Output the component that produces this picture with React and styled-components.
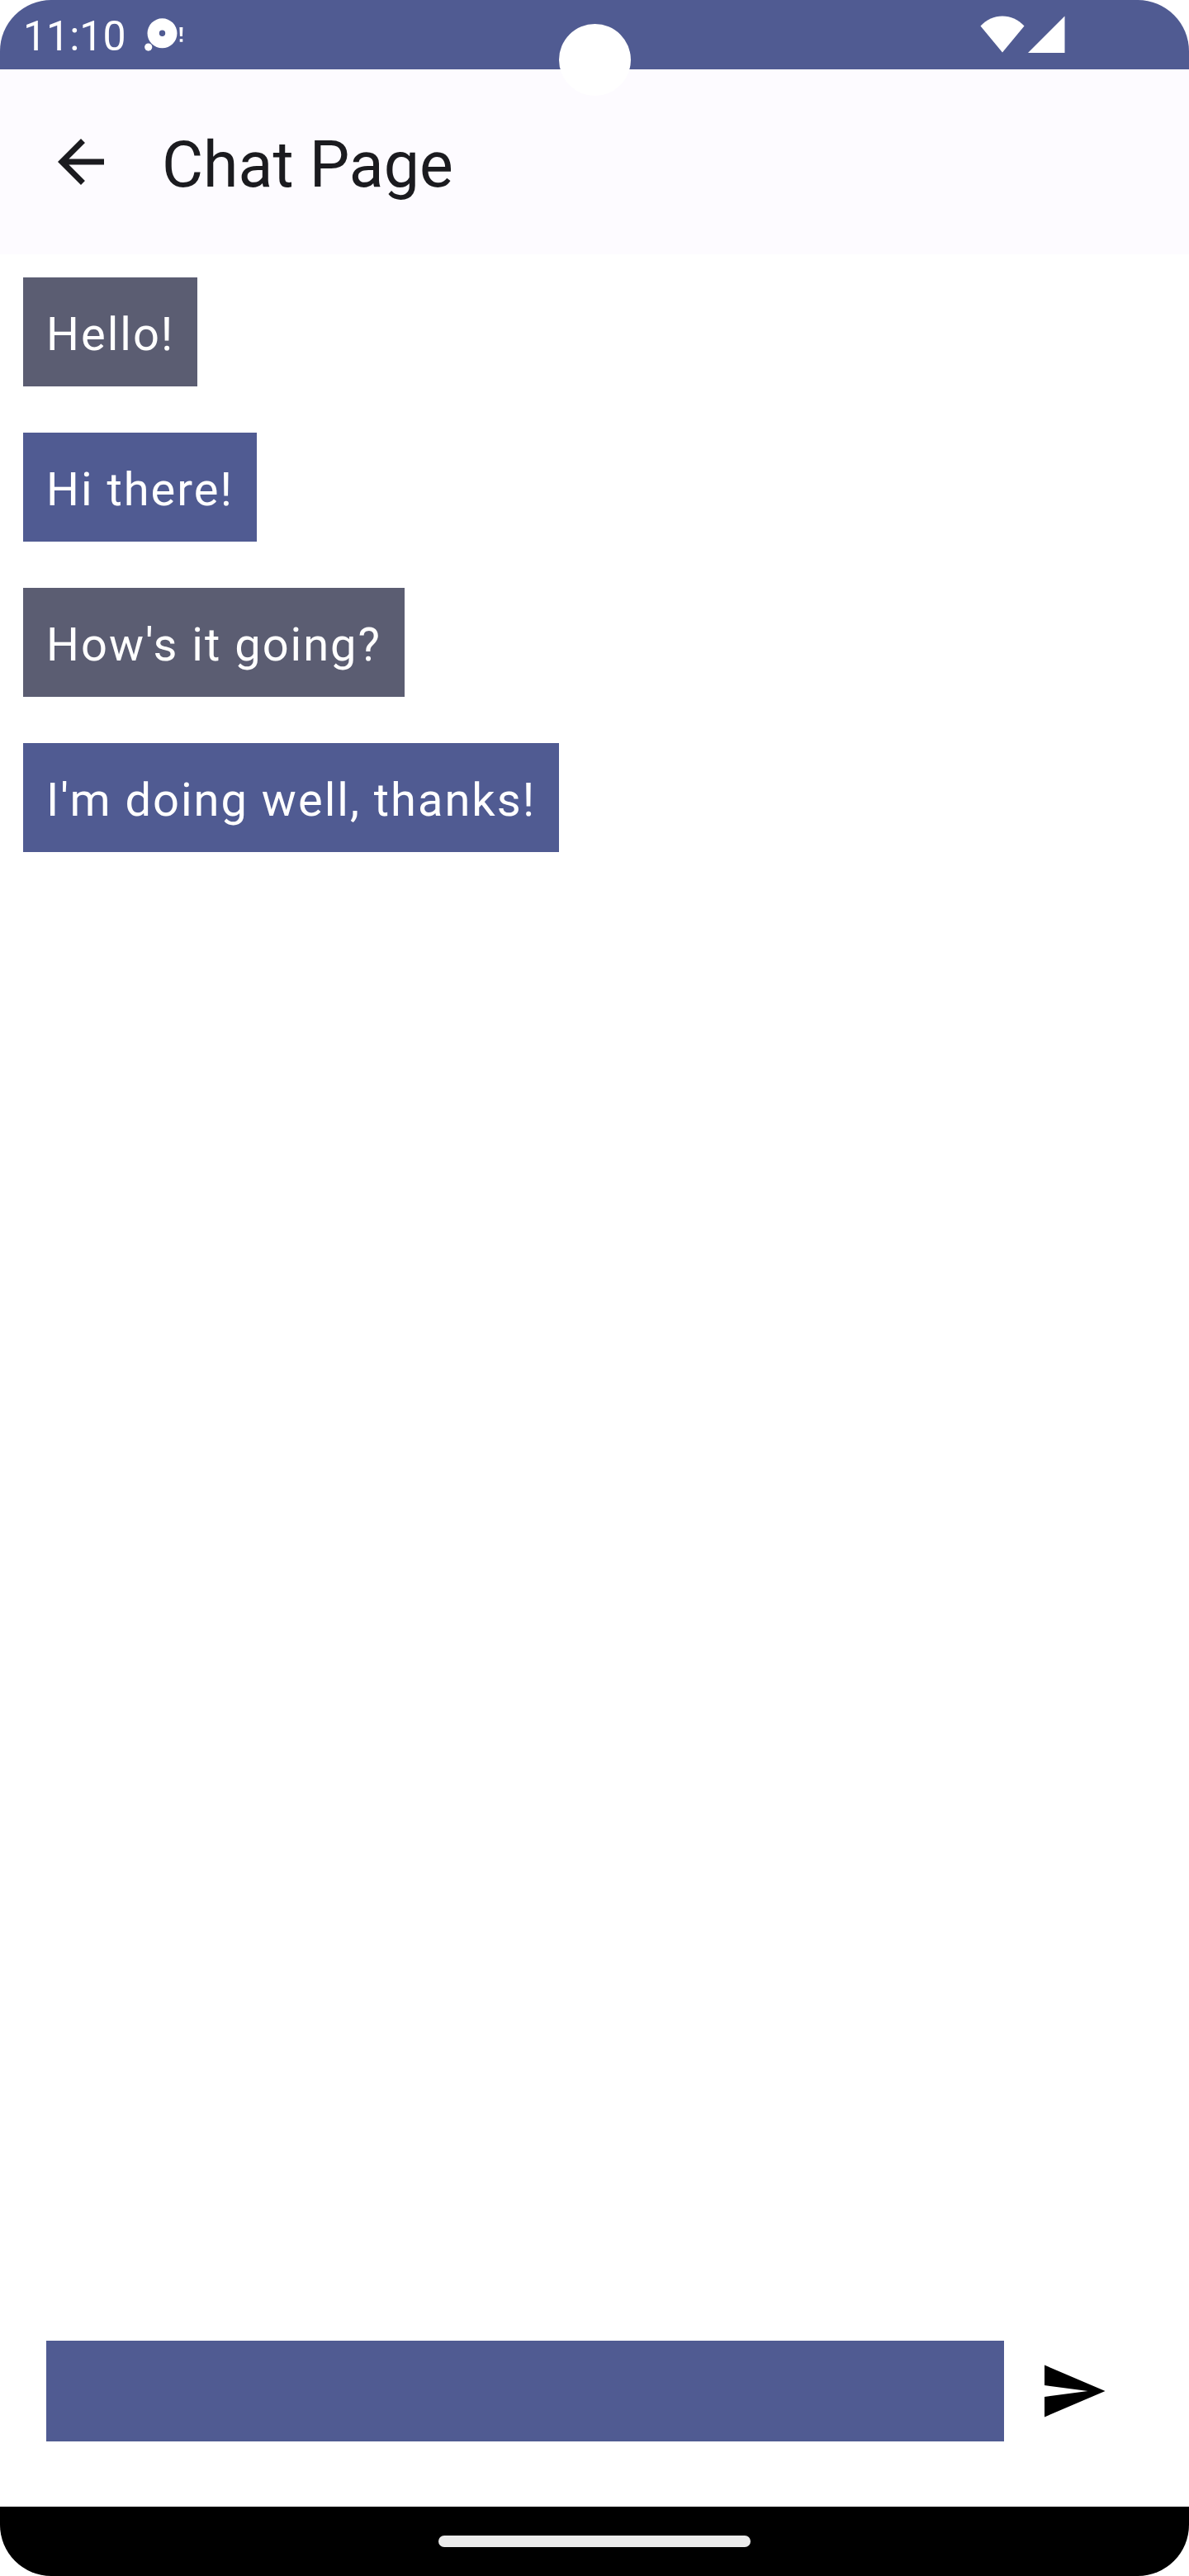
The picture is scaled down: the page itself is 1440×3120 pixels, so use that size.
import React, { useState } from "react";
import styled, { createGlobalStyle } from "styled-components";

const color = {
  primary: "#505b92",
  secondary: "#5b5d72",
  surface: "#fdfbff",
  ink: "#1b1b1f",
  handle: "#ebebeb",
};

const GlobalStyle = createGlobalStyle`
  *, *::before, *::after { box-sizing: border-box; }
  body {
    margin: 0;
    background: #ffffff;
    font-family: Roboto, "Liberation Sans", sans-serif;
  }
`;

const Screen = styled.div`
  position: relative;
  display: flex;
  flex-direction: column;
  min-height: 100vh;
  overflow: hidden;
  border-radius: 62px;
  background: #ffffff;
`;

const StatusBar = styled.div`
  display: flex;
  align-items: center;
  justify-content: space-between;
  height: 84px;
  padding: 0 150px 0 28px;
  background: ${color.primary};
  color: #ffffff;
`;

const StatusGroup = styled.div`
  display: flex;
  align-items: center;
  gap: ${(p) => p.$gap}px;
`;

const Clock = styled.time`
  padding-top: 4px;
  font-size: 50px;
  line-height: 80px;
`;

const Camera = styled.div`
  position: absolute;
  top: 29px;
  left: 50%;
  width: 87px;
  height: 87px;
  margin-left: -43px;
  border-radius: 50%;
  background: #ffffff;
`;

const AppBar = styled.header`
  display: flex;
  align-items: center;
  gap: 14px;
  height: 224px;
  padding: 0 14px;
  background: ${color.surface};
  color: ${color.ink};
`;

const IconButton = styled.button`
  display: flex;
  flex: none;
  align-items: center;
  justify-content: center;
  width: 168px;
  height: 168px;
  padding: 0;
  border: 0;
  background: transparent;
  color: inherit;
  cursor: pointer;
`;

const Title = styled.h1`
  margin: 0;
  padding-top: 8px;
  font-size: 77px;
  font-weight: 400;
  line-height: 98px;
`;

const Messages = styled.ul`
  display: flex;
  flex: 1;
  flex-direction: column;
  align-items: flex-start;
  gap: 56px;
  margin: 0;
  padding: 28px;
  list-style: none;
`;

const Bubble = styled.li`
  padding: 28px 28px 22px;
  background: ${(p) => (p.$mine ? color.primary : color.secondary)};
  color: #ffffff;
  font-size: 56px;
  line-height: 82px;
  letter-spacing: 2px;
`;

const Composer = styled.form`
  display: flex;
  align-items: center;
  padding: 0 56px 56px;
`;

const MessageInput = styled.input`
  flex: 1;
  min-width: 0;
  height: 122px;
  padding: 0 28px;
  border: 0;
  border-radius: 0;
  outline: none;
  background: ${color.primary};
  color: #ffffff;
  font: inherit;
  font-size: 56px;
`;

const NavigationBar = styled.div`
  display: flex;
  align-items: center;
  justify-content: center;
  height: 84px;
  background: #000000;
`;

const Handle = styled.div`
  width: 378px;
  height: 14px;
  border-radius: 7px;
  background: ${color.handle};
`;

const NotificationIcon = () => (
  <svg width="48" height="42" viewBox="0 0 48 42" fill="currentColor" aria-hidden="true">
    <path
      fillRule="evenodd"
      d="M21.5 1.3a18 18 0 1 1 0 36a18 18 0 1 1 0-36zM21.5 15.6a3.7 3.7 0 1 0 0 7.4a3.7 3.7 0 1 0 0-7.4z"
    />
    <circle cx="4.7" cy="36.1" r="4.6" />
    <path d="M42.4 12h4l-.5 11h-3zM42.7 26.2h3.6v3.6h-3.6z" />
  </svg>
);

const WifiIcon = () => (
  <svg width="54" height="46" viewBox="0 0 54 46" fill="currentColor" aria-hidden="true">
    <path d="M0.5 12.5C8 4.500 17 0.500 27 0.500S46 4.500 53.500 12.500L27 44.500z" />
  </svg>
);

const SignalIcon = () => (
  <svg width="45" height="46" viewBox="0 0 45 46" fill="currentColor" aria-hidden="true">
    <path d="M0 45L44.500 0.500V45z" />
  </svg>
);

const BackIcon = () => (
  <svg width="84" height="84" viewBox="0 0 24 24" fill="currentColor" aria-hidden="true">
    <path d="M20 11H7.830l5.590-5.590L12 4l-8 8 8 8 1.410-1.410L7.830 13H20v-2z" />
  </svg>
);

const SendIcon = () => (
  <svg width="84" height="84" viewBox="0 0 24 24" fill="#000000" aria-hidden="true">
    <path d="M2.010 21L23 12 2.010 3 2 10l15 2-15 2z" />
  </svg>
);

const initialMessages = [
  { text: "Hello!", mine: false },
  { text: "Hi there!", mine: true },
  { text: "How's it going?", mine: false },
  { text: "I'm doing well, thanks!", mine: true },
];

export default function App() {
  const [messages, setMessages] = useState(initialMessages);
  const [draft, setDraft] = useState("");

  const send = (event) => {
    event.preventDefault();
    if (!draft.trim()) return;
    setMessages([...messages, { text: draft, mine: true }]);
    setDraft("");
  };

  return (
    <>
      <GlobalStyle />
      <Screen>
        <StatusBar>
          <StatusGroup $gap={22}>
            <Clock>11:10</Clock>
            <NotificationIcon />
          </StatusGroup>
          <StatusGroup $gap={4}>
            <WifiIcon />
            <SignalIcon />
          </StatusGroup>
        </StatusBar>
        <Camera />
        <AppBar>
          <IconButton type="button" aria-label="Back">
            <BackIcon />
          </IconButton>
          <Title>Chat Page</Title>
        </AppBar>
        <Messages>
          {messages.map((message, index) => (
            <Bubble key={index} $mine={message.mine}>
              {message.text}
            </Bubble>
          ))}
        </Messages>
        <Composer onSubmit={send}>
          <MessageInput
            type="text"
            aria-label="Message"
            value={draft}
            onChange={(event) => setDraft(event.target.value)}
          />
          <IconButton type="submit" aria-label="Send">
            <SendIcon />
          </IconButton>
        </Composer>
        <NavigationBar>
          <Handle />
        </NavigationBar>
      </Screen>
    </>
  );
}
